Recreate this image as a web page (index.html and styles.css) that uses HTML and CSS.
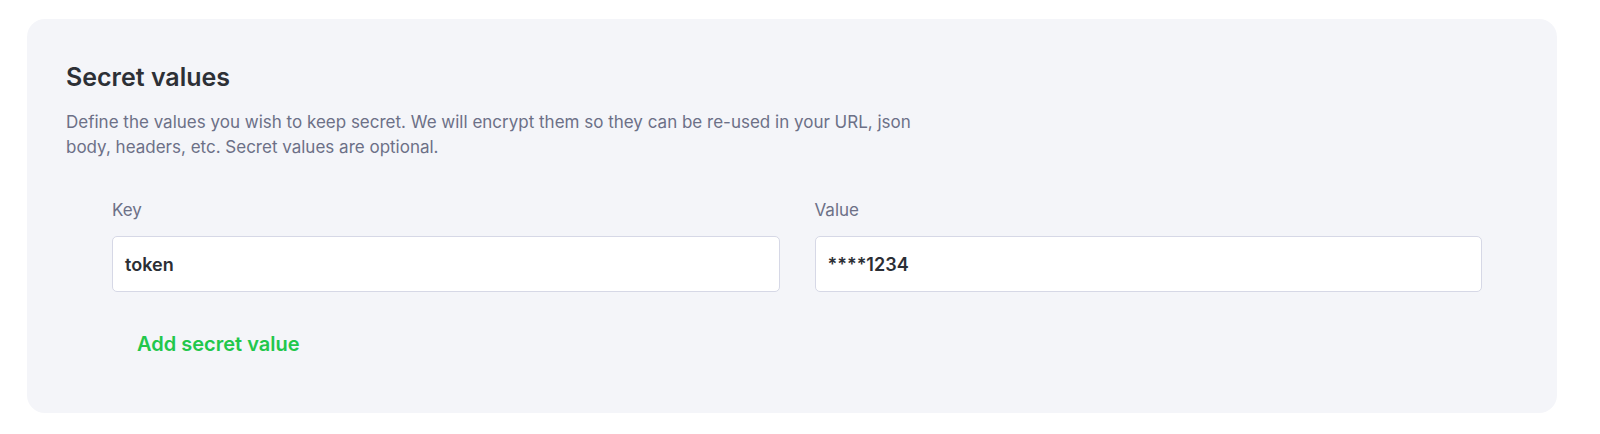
FILE: index.html
```html
<!DOCTYPE html>
<html lang="en">
<head>
<meta charset="utf-8">
<title>Secret values</title>
<link rel="stylesheet" href="styles.css">
</head>
<body>
<section class="card">
  <h2 class="title">Secret values</h2>
  <p class="desc">Define the values you wish to keep secret. We will encrypt them so they can be re-used in your URL, json body, headers, etc. Secret values are optional.</p>
  <div class="pairs">
    <div class="field">
      <label class="label">Key</label>
      <div class="input">token</div>
    </div>
    <div class="field">
      <label class="label">Value</label>
      <div class="input">****1234</div>
    </div>
  </div>
  <a class="add" href="#">Add secret value</a>
</section>
</body>
</html>
```
FILE: styles.css
```css
html, body {
  margin: 0;
  padding: 0;
  background: #ffffff;
}
body {
  font-family: "Inter", "Lato", "Liberation Sans", sans-serif;
  padding: 19px 43px 21px 27px;
}
.card {
  background: #f4f5f9;
  border-radius: 18px;
  padding: 42px 39px 57px 39px;
}
.title {
  margin: 0;
  font-size: 25px;
  line-height: 32px;
  font-weight: 600;
  color: #2d3036;
}
.desc {
  margin: 17px 0 0 0;
  max-width: 880px;
  font-size: 17px;
  line-height: 25px;
  color: #6c7087;
}
.pairs {
  margin: 39px 36px 0 46px;
  display: grid;
  grid-template-columns: 1fr 1fr;
  column-gap: 35px;
}
.field {
  display: flex;
  flex-direction: column;
}
.label {
  font-size: 17px;
  line-height: 22px;
  color: #6c7087;
  margin-bottom: 15px;
}
.input {
  box-sizing: border-box;
  height: 56px;
  background: #ffffff;
  border: 1px solid #d6d8e6;
  border-radius: 5px;
  padding: 0 12px;
  display: flex;
  align-items: center;
  font-size: 18px;
  font-weight: 600;
  color: #2b2e34;
}
.add {
  display: inline-block;
  margin: 40px 0 0 71px;
  font-size: 20px;
  line-height: 24px;
  font-weight: 600;
  color: #22c74b;
  text-decoration: none;
}
```
